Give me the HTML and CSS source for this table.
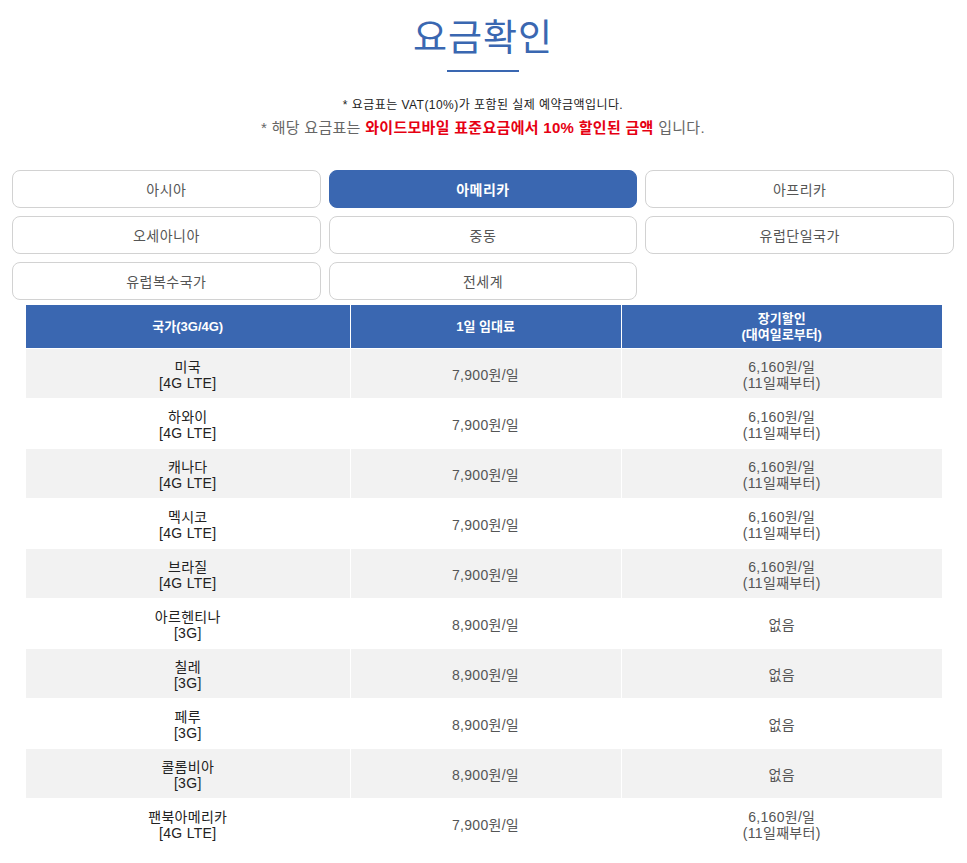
FILE: index.html
```html
<!DOCTYPE html>
<html lang="ko">
<head>
<meta charset="utf-8">
<title>요금확인</title>
<link rel="stylesheet" href="styles.css">
</head>
<body>
<div class="page">
  <h1 class="title">요금확인</h1>
  <div class="title-bar"></div>
  <p class="note-small">* 요금표는 VAT(10%)가 포함된 실제 예약금액입니다.</p>
  <p class="note-main">* 해당 요금표는 <strong class="red">와이드모바일 표준요금에서 10% 할인된 금액</strong> 입니다.</p>

  <div class="tabs">
    <button class="tab">아시아</button>
    <button class="tab active">아메리카</button>
    <button class="tab">아프리카</button>
    <button class="tab">오세아니아</button>
    <button class="tab">중동</button>
    <button class="tab">유럽단일국가</button>
    <button class="tab">유럽복수국가</button>
    <button class="tab">전세계</button>
  </div>

  <table class="rates">
    <colgroup>
      <col class="c1"><col class="c2"><col class="c3">
    </colgroup>
    <thead>
      <tr><th>국가(3G/4G)</th><th>1일 임대료</th><th>장기할인<br>(대여일로부터)</th></tr>
    </thead>
    <tbody>
      <tr><td class="country">미국<br>[4G LTE]</td><td>7,900원/일</td><td>6,160원/일<br>(11일째부터)</td></tr>
      <tr><td class="country">하와이<br>[4G LTE]</td><td>7,900원/일</td><td>6,160원/일<br>(11일째부터)</td></tr>
      <tr><td class="country">캐나다<br>[4G LTE]</td><td>7,900원/일</td><td>6,160원/일<br>(11일째부터)</td></tr>
      <tr><td class="country">멕시코<br>[4G LTE]</td><td>7,900원/일</td><td>6,160원/일<br>(11일째부터)</td></tr>
      <tr><td class="country">브라질<br>[4G LTE]</td><td>7,900원/일</td><td>6,160원/일<br>(11일째부터)</td></tr>
      <tr><td class="country">아르헨티나<br>[3G]</td><td>8,900원/일</td><td>없음</td></tr>
      <tr><td class="country">칠레<br>[3G]</td><td>8,900원/일</td><td>없음</td></tr>
      <tr><td class="country">페루<br>[3G]</td><td>8,900원/일</td><td>없음</td></tr>
      <tr><td class="country">콜롬비아<br>[3G]</td><td>8,900원/일</td><td>없음</td></tr>
      <tr><td class="country">팬북아메리카<br>[4G LTE]</td><td>7,900원/일</td><td>6,160원/일<br>(11일째부터)</td></tr>
    </tbody>
  </table>
</div>
</body>
</html>
```

FILE: styles.css
```css
* { box-sizing: border-box; }
html, body { margin: 0; padding: 0; background: #fff; }
body {
  font-family: "Liberation Sans", "Noto Sans CJK KR", Arial, sans-serif;
  color: #333;
}
.page {
  padding: 13px 13px 15px 12px;
  display: flex;
  flex-direction: column;
  align-items: center;
}
.title {
  margin: 0;
  font-family: "Noto Sans CJK KR", sans-serif;
  font-weight: 400;
  font-size: 37px;
  line-height: 44px;
  color: #3a67b1;
  letter-spacing: 1px;
}
.title-bar {
  width: 72px;
  height: 2px;
  background: #3a67b1;
  margin-top: 13px;
}
.note-small {
  margin: 25px 0 0;
  font-size: 12px;
  line-height: 16px;
  color: #222;
  letter-spacing: 0.45px;
}
.note-main {
  margin: 5px 0 0;
  font-size: 15px;
  line-height: 20px;
  color: #666;
  letter-spacing: 0.3px;
}
.red { color: #e60012; font-weight: 700; }

.tabs {
  align-self: stretch;
  margin-top: 32px;
  display: grid;
  grid-template-columns: repeat(3, 1fr);
  grid-auto-rows: 38px;
  gap: 8px;
}
.tab {
  font-family: "Liberation Sans", "Noto Sans CJK KR", sans-serif;
  font-size: 14px;
  color: #555;
  background: #fff;
  border: 1px solid #d2d2d2;
  border-radius: 8px;
  padding: 0;
  letter-spacing: 0.5px;
}
.tab.active {
  background: #3a67b1;
  border-color: #3a67b1;
  color: #fff;
  font-weight: 700;
}

.rates {
  margin-top: 5px;
  margin-left: 2px;
  width: 916px;
  border-collapse: collapse;
  table-layout: fixed;
  font-size: 14px;
}
.rates col.c1 { width: 324px; }
.rates col.c2 { width: 271px; }
.rates col.c3 { width: 321px; }
.rates th {
  height: 43px;
  background: #3a67b1;
  color: #fff;
  font-size: 13px;
  font-weight: 700;
  line-height: 16px;
  border-left: 1px solid #fff;
  padding: 1px 0 0;
}
.rates th:first-child, .rates td:first-child { border-left: none; }
.rates td {
  height: 50px;
  text-align: center;
  line-height: 16px;
  color: #555;
  border-left: 1px solid #fff;
  border-top: 1px solid #fff;
  padding: 3px 0 0;
  letter-spacing: 0.3px;
}
.rates td.country { color: #222; }
.rates tbody tr:nth-child(odd) td { background: #f2f2f2; }
```
